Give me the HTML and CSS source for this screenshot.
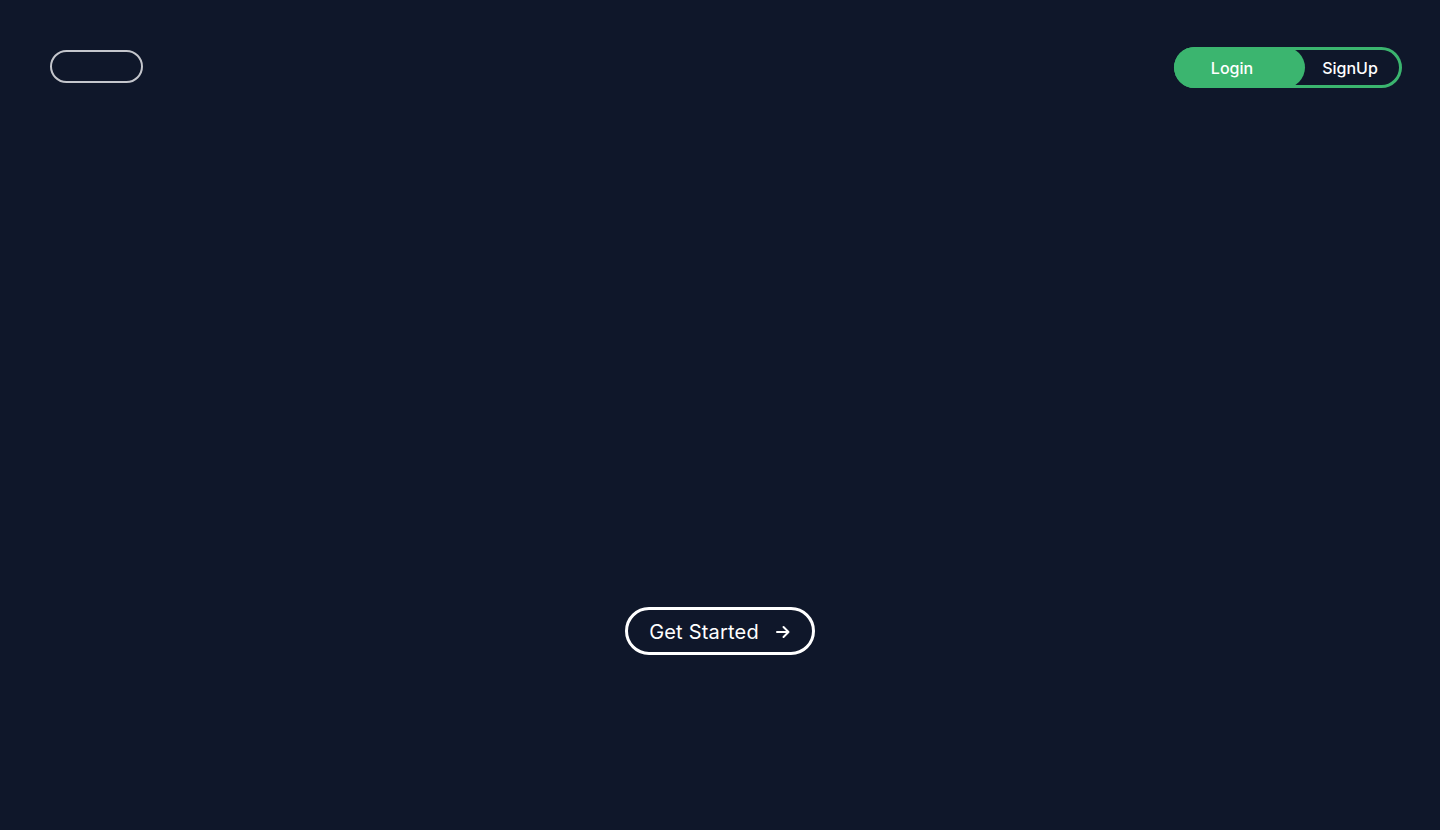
FILE: index.html
```html
<!DOCTYPE html>
<html lang="en">
<head>
<meta charset="utf-8">
<title>Home</title>
<link rel="stylesheet" href="styles.css">
</head>
<body>
<header class="topbar">
  <div class="logo-pill"></div>
  <div class="auth-toggle">
    <button class="auth-btn active">Login</button>
    <button class="auth-btn">SignUp</button>
  </div>
</header>
<main class="hero">
  <button class="cta"><span class="cta-label">Get Started</span>
    <svg class="cta-arrow" viewBox="0 0 16 16" width="16" height="16" fill="none" stroke="currentColor" stroke-width="2" stroke-linecap="round" stroke-linejoin="round"><path d="M2 8h11.5M8.5 3l5 5-5 5"/></svg>
  </button>
</main>
</body>
</html>
```
FILE: styles.css
```css
html, body {
  margin: 0;
  padding: 0;
}
body {
  background: #0f172a;
  color: #ffffff;
  font-family: Inter, "Open Sans", "Liberation Sans", sans-serif;
  height: 830px;
  overflow: hidden;
}
.topbar {
  display: flex;
  justify-content: space-between;
  align-items: flex-start;
  padding: 47px 38px 0 50px;
}
.logo-pill {
  width: 89px;
  height: 29px;
  margin-top: 3px;
  border: 2px solid #c4c6cc;
  border-radius: 999px;
}
.auth-toggle {
  display: flex;
  width: 228px;
  height: 41px;
  box-sizing: border-box;
  border-radius: 999px;
  box-shadow: inset 0 0 0 3px #3bb56f;
}
.auth-btn {
  border: none;
  background: transparent;
  color: #ffffff;
  font-family: inherit;
  font-size: 16px;
  font-weight: 500;
  height: 41px;
  padding: 0;
  border-radius: 999px;
  cursor: pointer;
}
.auth-btn.active {
  flex: none;
  width: 131px;
  padding-right: 15px;
  background: #3bb56f;
}
.auth-btn:not(.active) {
  flex: 1;
  padding-right: 7px;
}
.hero {
  display: flex;
  justify-content: center;
  padding-top: 519px;
}
.cta {
  display: flex;
  align-items: center;
  gap: 16px;
  height: 48px;
  box-sizing: border-box;
  padding: 1px 21px 0 21px;
  border: 3px solid #ffffff;
  border-radius: 999px;
  background: transparent;
  color: #ffffff;
  font-family: inherit;
  font-size: 20px;
  font-weight: 400;
  cursor: pointer;
}
.cta-label {
  letter-spacing: 0.2px;
}
.cta-arrow {
  display: block;
}
```
